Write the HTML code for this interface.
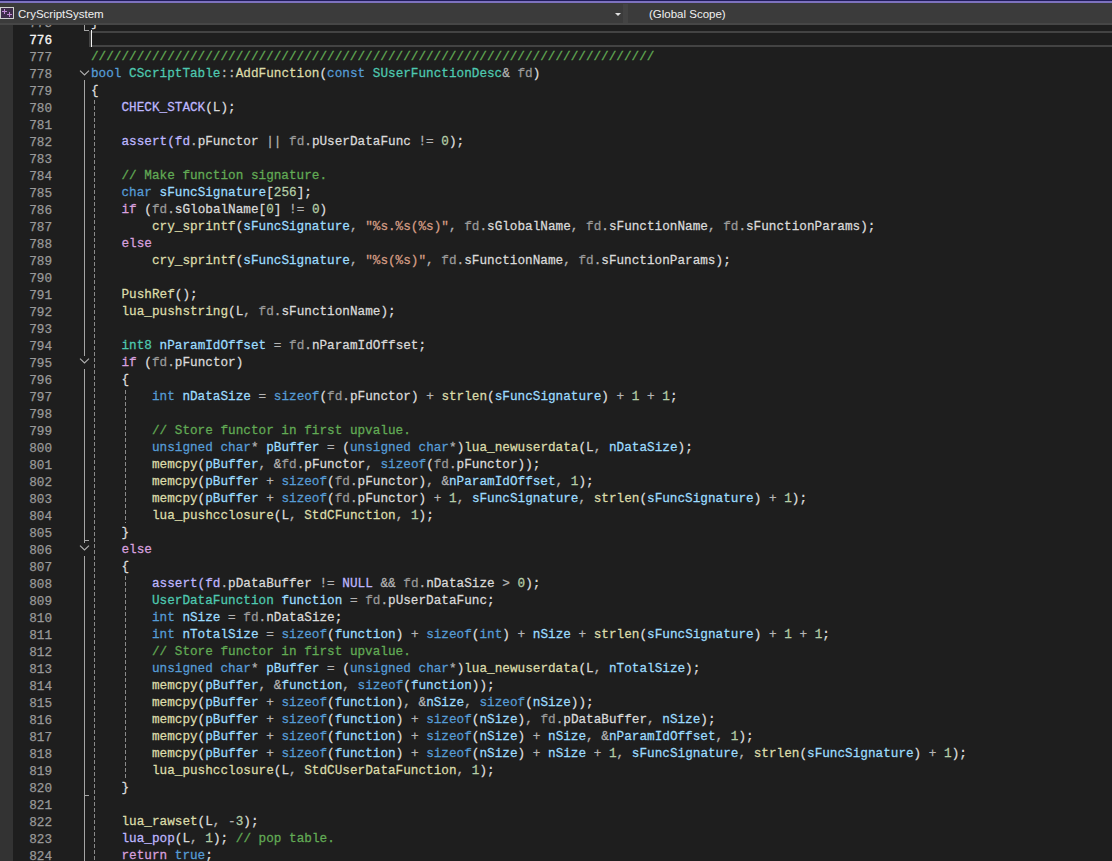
<!DOCTYPE html>
<html><head><meta charset="utf-8">
<style>
html,body{margin:0;padding:0;}
body{width:1112px;height:861px;overflow:hidden;position:relative;background:#1E1E1E;font-family:"Liberation Mono",monospace;}
#ed{position:absolute;left:0;top:0;width:1112px;height:861px;overflow:hidden;}
.l{position:absolute;left:91px;margin-top:1px;transform:scaleY(1.05);transform-origin:0 12px;height:17px;line-height:17px;font-size:12.69px;white-space:pre;-webkit-text-stroke:0.25px currentColor;color:#DCDCDC;}
.n{position:absolute;left:13px;width:39px;text-align:right;height:17px;line-height:17px;font-size:12.69px;margin-top:2px;-webkit-text-stroke:0.25px currentColor;color:#999999;}
.n.cur{color:#F4F4F4;-webkit-text-stroke:0.35px currentColor;}
i{font-style:normal;}
.kw{color:#569CD6}.ct{color:#D8A0DF}.ty{color:#4EC9B0}.fn{color:#DCDCAA}.lo{color:#9CDCFE}
.pa{color:#9A9A9A}.fl{color:#DADADA}.ma{color:#BEB7FF}.op{color:#B4B4B4}.nu{color:#B5CEA8}
.st{color:#D69D85}.cm{color:#62AB55}.p{color:#DCDCDC}
#ind{position:absolute;left:0;top:25px;width:13px;height:836px;background:#333333;}
#curline{position:absolute;left:89px;top:31px;width:1030px;height:12px;border:2px solid #434343;}
#caret{position:absolute;left:91px;top:30px;width:1px;height:17px;background:#F2F2F2;}
.vl{position:absolute;width:1px;background:#A5A5A5;}
.tk{position:absolute;height:1px;width:5px;background:#A5A5A5;}
.dg{position:absolute;width:1px;background:repeating-linear-gradient(to bottom,#8A8A8A 0,#8A8A8A 4px,transparent 4px,transparent 6px);}
.chev{position:absolute;left:79px;width:11px;height:7px;}
#bar{position:absolute;left:0;top:0;width:1112px;height:25px;background:#3B3B3B;z-index:5;font-family:"Liberation Sans",sans-serif;}
#t0{position:absolute;left:0;top:0;width:1112px;height:1px;background:#211C5C;}
#t1{position:absolute;left:0;top:1px;width:1112px;height:2px;background:#7D72BF;}
#tb{position:absolute;left:0;top:23px;width:1112px;height:2px;background:#464646;}
#proj{position:absolute;left:18px;top:6px;font-size:11.5px;line-height:16px;color:#F0F0F0;}
#scope{position:absolute;left:649px;top:6px;font-size:11.5px;line-height:16px;color:#F0F0F0;}
#sep{position:absolute;left:623px;top:4px;width:5px;height:19px;background:#434343;}
#arrow{position:absolute;left:615px;top:13px;width:0;height:0;border-left:3px solid transparent;border-right:3px solid transparent;border-top:3px solid #E0E0E0;}
#icon{position:absolute;left:0;top:7px;width:14px;height:12px;}
</style></head><body>
<div id="ed">
<div id="ind"></div>
<div class="n" style="top:13px">775</div>
<div class="n cur" style="top:30px">776</div>
<div class="n" style="top:47px">777</div>
<div class="n" style="top:64px">778</div>
<div class="n" style="top:81px">779</div>
<div class="n" style="top:98px">780</div>
<div class="n" style="top:115px">781</div>
<div class="n" style="top:132px">782</div>
<div class="n" style="top:149px">783</div>
<div class="n" style="top:166px">784</div>
<div class="n" style="top:183px">785</div>
<div class="n" style="top:200px">786</div>
<div class="n" style="top:217px">787</div>
<div class="n" style="top:234px">788</div>
<div class="n" style="top:251px">789</div>
<div class="n" style="top:268px">790</div>
<div class="n" style="top:285px">791</div>
<div class="n" style="top:302px">792</div>
<div class="n" style="top:319px">793</div>
<div class="n" style="top:336px">794</div>
<div class="n" style="top:353px">795</div>
<div class="n" style="top:370px">796</div>
<div class="n" style="top:387px">797</div>
<div class="n" style="top:404px">798</div>
<div class="n" style="top:421px">799</div>
<div class="n" style="top:438px">800</div>
<div class="n" style="top:455px">801</div>
<div class="n" style="top:472px">802</div>
<div class="n" style="top:489px">803</div>
<div class="n" style="top:506px">804</div>
<div class="n" style="top:523px">805</div>
<div class="n" style="top:540px">806</div>
<div class="n" style="top:557px">807</div>
<div class="n" style="top:574px">808</div>
<div class="n" style="top:591px">809</div>
<div class="n" style="top:608px">810</div>
<div class="n" style="top:625px">811</div>
<div class="n" style="top:642px">812</div>
<div class="n" style="top:659px">813</div>
<div class="n" style="top:676px">814</div>
<div class="n" style="top:693px">815</div>
<div class="n" style="top:710px">816</div>
<div class="n" style="top:727px">817</div>
<div class="n" style="top:744px">818</div>
<div class="n" style="top:761px">819</div>
<div class="n" style="top:778px">820</div>
<div class="n" style="top:795px">821</div>
<div class="n" style="top:812px">822</div>
<div class="n" style="top:829px">823</div>
<div class="n" style="top:846px">824</div>
<div id="curline"></div>
<div id="caret"></div>
<!-- outline margin -->
<div class="vl" style="left:84px;top:25px;height:5px"></div>
<div class="tk" style="left:84px;top:30px"></div>
<svg class="chev" style="top:70px" viewBox="0 0 11 7"><path d="M1 0.6 L5.5 5 L10 0.6" fill="none" stroke="#B0B0B0" stroke-width="1.15"/></svg>
<div class="vl" style="left:84px;top:80px;height:276px"></div>
<svg class="chev" style="top:358px" viewBox="0 0 11 7"><path d="M1 0.6 L5.5 5 L10 0.6" fill="none" stroke="#B0B0B0" stroke-width="1.15"/></svg>
<div class="vl" style="left:84px;top:369px;height:174px"></div>
<div class="tk" style="left:84px;top:540px"></div>
<svg class="chev" style="top:545px" viewBox="0 0 11 7"><path d="M1 0.6 L5.5 5 L10 0.6" fill="none" stroke="#B0B0B0" stroke-width="1.15"/></svg>
<div class="vl" style="left:84px;top:556px;height:305px"></div>
<div class="tk" style="left:84px;top:795px"></div>
<!-- indent guides -->
<div class="dg" style="left:94px;top:100px;height:761px"></div>
<div class="dg" style="left:125px;top:390px;height:133px"></div>
<div class="dg" style="left:125px;top:576px;height:203px"></div>
<div class="l" style="top:13px"><i class="p">}</i></div>
<div class="l" style="top:47px"><i class="cm">//////////////////////////////////////////////////////////////////////////</i></div>
<div class="l" style="top:64px"><i class="kw">bool</i> <i class="ty">CScriptTable</i><i class="op">::</i><i class="fn">AddFunction</i><i class="p">(</i><i class="kw">const</i> <i class="ty">SUserFunctionDesc</i><i class="op">&amp;</i> <i class="pa">fd</i><i class="p">)</i></div>
<div class="l" style="top:81px"><i class="p">{</i></div>
<div class="l" style="top:98px">    <i class="ma">CHECK_STACK</i><i class="p">(</i><i class="fl">L</i><i class="p">)</i><i class="p">;</i></div>
<div class="l" style="top:132px">    <i class="ma">assert(fd</i><i class="op">.</i><i class="fl">pFunctor</i> <i class="op">||</i> <i class="pa">fd</i><i class="op">.</i><i class="fl">pUserDataFunc</i> <i class="op">!=</i> <i class="nu">0</i><i class="p">)</i><i class="p">;</i></div>
<div class="l" style="top:166px">    <i class="cm">// Make function signature.</i></div>
<div class="l" style="top:183px">    <i class="kw">char</i> <i class="lo">sFuncSignature</i><i class="p">[</i><i class="nu">256</i><i class="p">]</i><i class="p">;</i></div>
<div class="l" style="top:200px">    <i class="ct">if</i> <i class="p">(</i><i class="pa">fd</i><i class="op">.</i><i class="fl">sGlobalName</i><i class="p">[</i><i class="nu">0</i><i class="p">]</i> <i class="op">!=</i> <i class="nu">0</i><i class="p">)</i></div>
<div class="l" style="top:217px">        <i class="fn">cry_sprintf</i><i class="p">(</i><i class="lo">sFuncSignature</i><i class="op">,</i> <i class="st">"%s.%s(%s)"</i><i class="op">,</i> <i class="pa">fd</i><i class="op">.</i><i class="fl">sGlobalName</i><i class="op">,</i> <i class="pa">fd</i><i class="op">.</i><i class="fl">sFunctionName</i><i class="op">,</i> <i class="pa">fd</i><i class="op">.</i><i class="fl">sFunctionParams</i><i class="p">)</i><i class="p">;</i></div>
<div class="l" style="top:234px">    <i class="ct">else</i></div>
<div class="l" style="top:251px">        <i class="fn">cry_sprintf</i><i class="p">(</i><i class="lo">sFuncSignature</i><i class="op">,</i> <i class="st">"%s(%s)"</i><i class="op">,</i> <i class="pa">fd</i><i class="op">.</i><i class="fl">sFunctionName</i><i class="op">,</i> <i class="pa">fd</i><i class="op">.</i><i class="fl">sFunctionParams</i><i class="p">)</i><i class="p">;</i></div>
<div class="l" style="top:285px">    <i class="fn">PushRef</i><i class="p">(</i><i class="p">)</i><i class="p">;</i></div>
<div class="l" style="top:302px">    <i class="fn">lua_pushstring</i><i class="p">(</i><i class="fl">L</i><i class="op">,</i> <i class="pa">fd</i><i class="op">.</i><i class="fl">sFunctionName</i><i class="p">)</i><i class="p">;</i></div>
<div class="l" style="top:336px">    <i class="ty">int8</i> <i class="lo">nParamIdOffset</i> <i class="op">=</i> <i class="pa">fd</i><i class="op">.</i><i class="fl">nParamIdOffset</i><i class="p">;</i></div>
<div class="l" style="top:353px">    <i class="ct">if</i> <i class="p">(</i><i class="pa">fd</i><i class="op">.</i><i class="fl">pFunctor</i><i class="p">)</i></div>
<div class="l" style="top:370px">    <i class="p">{</i></div>
<div class="l" style="top:387px">        <i class="kw">int</i> <i class="lo">nDataSize</i> <i class="op">=</i> <i class="kw">sizeof</i><i class="p">(</i><i class="pa">fd</i><i class="op">.</i><i class="fl">pFunctor</i><i class="p">)</i> <i class="op">+</i> <i class="fn">strlen</i><i class="p">(</i><i class="lo">sFuncSignature</i><i class="p">)</i> <i class="op">+</i> <i class="nu">1</i> <i class="op">+</i> <i class="nu">1</i><i class="p">;</i></div>
<div class="l" style="top:421px">        <i class="cm">// Store functor in first upvalue.</i></div>
<div class="l" style="top:438px">        <i class="kw">unsigned</i> <i class="kw">char</i><i class="op">*</i> <i class="lo">pBuffer</i> <i class="op">=</i> <i class="p">(</i><i class="kw">unsigned</i> <i class="kw">char</i><i class="op">*</i><i class="p">)</i><i class="fn">lua_newuserdata</i><i class="p">(</i><i class="fl">L</i><i class="op">,</i> <i class="lo">nDataSize</i><i class="p">)</i><i class="p">;</i></div>
<div class="l" style="top:455px">        <i class="fn">memcpy</i><i class="p">(</i><i class="lo">pBuffer</i><i class="op">,</i> <i class="op">&amp;</i><i class="pa">fd</i><i class="op">.</i><i class="fl">pFunctor</i><i class="op">,</i> <i class="kw">sizeof</i><i class="p">(</i><i class="pa">fd</i><i class="op">.</i><i class="fl">pFunctor</i><i class="p">)</i><i class="p">)</i><i class="p">;</i></div>
<div class="l" style="top:472px">        <i class="fn">memcpy</i><i class="p">(</i><i class="lo">pBuffer</i> <i class="op">+</i> <i class="kw">sizeof</i><i class="p">(</i><i class="pa">fd</i><i class="op">.</i><i class="fl">pFunctor</i><i class="p">)</i><i class="op">,</i> <i class="op">&amp;</i><i class="lo">nParamIdOffset</i><i class="op">,</i> <i class="nu">1</i><i class="p">)</i><i class="p">;</i></div>
<div class="l" style="top:489px">        <i class="fn">memcpy</i><i class="p">(</i><i class="lo">pBuffer</i> <i class="op">+</i> <i class="kw">sizeof</i><i class="p">(</i><i class="pa">fd</i><i class="op">.</i><i class="fl">pFunctor</i><i class="p">)</i> <i class="op">+</i> <i class="nu">1</i><i class="op">,</i> <i class="lo">sFuncSignature</i><i class="op">,</i> <i class="fn">strlen</i><i class="p">(</i><i class="lo">sFuncSignature</i><i class="p">)</i> <i class="op">+</i> <i class="nu">1</i><i class="p">)</i><i class="p">;</i></div>
<div class="l" style="top:506px">        <i class="fn">lua_pushcclosure</i><i class="p">(</i><i class="fl">L</i><i class="op">,</i> <i class="fn">StdCFunction</i><i class="op">,</i> <i class="nu">1</i><i class="p">)</i><i class="p">;</i></div>
<div class="l" style="top:523px">    <i class="p">}</i></div>
<div class="l" style="top:540px">    <i class="ct">else</i></div>
<div class="l" style="top:557px">    <i class="p">{</i></div>
<div class="l" style="top:574px">        <i class="ma">assert(fd</i><i class="op">.</i><i class="fl">pDataBuffer</i> <i class="op">!=</i> <i class="ma">NULL</i> <i class="op">&amp;&amp;</i> <i class="pa">fd</i><i class="op">.</i><i class="fl">nDataSize</i> <i class="op">&gt;</i> <i class="nu">0</i><i class="p">)</i><i class="p">;</i></div>
<div class="l" style="top:591px">        <i class="ty">UserDataFunction</i> <i class="lo">function</i> <i class="op">=</i> <i class="pa">fd</i><i class="op">.</i><i class="fl">pUserDataFunc</i><i class="p">;</i></div>
<div class="l" style="top:608px">        <i class="kw">int</i> <i class="lo">nSize</i> <i class="op">=</i> <i class="pa">fd</i><i class="op">.</i><i class="fl">nDataSize</i><i class="p">;</i></div>
<div class="l" style="top:625px">        <i class="kw">int</i> <i class="lo">nTotalSize</i> <i class="op">=</i> <i class="kw">sizeof</i><i class="p">(</i><i class="lo">function</i><i class="p">)</i> <i class="op">+</i> <i class="kw">sizeof</i><i class="p">(</i><i class="kw">int</i><i class="p">)</i> <i class="op">+</i> <i class="lo">nSize</i> <i class="op">+</i> <i class="fn">strlen</i><i class="p">(</i><i class="lo">sFuncSignature</i><i class="p">)</i> <i class="op">+</i> <i class="nu">1</i> <i class="op">+</i> <i class="nu">1</i><i class="p">;</i></div>
<div class="l" style="top:642px">        <i class="cm">// Store functor in first upvalue.</i></div>
<div class="l" style="top:659px">        <i class="kw">unsigned</i> <i class="kw">char</i><i class="op">*</i> <i class="lo">pBuffer</i> <i class="op">=</i> <i class="p">(</i><i class="kw">unsigned</i> <i class="kw">char</i><i class="op">*</i><i class="p">)</i><i class="fn">lua_newuserdata</i><i class="p">(</i><i class="fl">L</i><i class="op">,</i> <i class="lo">nTotalSize</i><i class="p">)</i><i class="p">;</i></div>
<div class="l" style="top:676px">        <i class="fn">memcpy</i><i class="p">(</i><i class="lo">pBuffer</i><i class="op">,</i> <i class="op">&amp;</i><i class="lo">function</i><i class="op">,</i> <i class="kw">sizeof</i><i class="p">(</i><i class="lo">function</i><i class="p">)</i><i class="p">)</i><i class="p">;</i></div>
<div class="l" style="top:693px">        <i class="fn">memcpy</i><i class="p">(</i><i class="lo">pBuffer</i> <i class="op">+</i> <i class="kw">sizeof</i><i class="p">(</i><i class="lo">function</i><i class="p">)</i><i class="op">,</i> <i class="op">&amp;</i><i class="lo">nSize</i><i class="op">,</i> <i class="kw">sizeof</i><i class="p">(</i><i class="lo">nSize</i><i class="p">)</i><i class="p">)</i><i class="p">;</i></div>
<div class="l" style="top:710px">        <i class="fn">memcpy</i><i class="p">(</i><i class="lo">pBuffer</i> <i class="op">+</i> <i class="kw">sizeof</i><i class="p">(</i><i class="lo">function</i><i class="p">)</i> <i class="op">+</i> <i class="kw">sizeof</i><i class="p">(</i><i class="lo">nSize</i><i class="p">)</i><i class="op">,</i> <i class="pa">fd</i><i class="op">.</i><i class="fl">pDataBuffer</i><i class="op">,</i> <i class="lo">nSize</i><i class="p">)</i><i class="p">;</i></div>
<div class="l" style="top:727px">        <i class="fn">memcpy</i><i class="p">(</i><i class="lo">pBuffer</i> <i class="op">+</i> <i class="kw">sizeof</i><i class="p">(</i><i class="lo">function</i><i class="p">)</i> <i class="op">+</i> <i class="kw">sizeof</i><i class="p">(</i><i class="lo">nSize</i><i class="p">)</i> <i class="op">+</i> <i class="lo">nSize</i><i class="op">,</i> <i class="op">&amp;</i><i class="lo">nParamIdOffset</i><i class="op">,</i> <i class="nu">1</i><i class="p">)</i><i class="p">;</i></div>
<div class="l" style="top:744px">        <i class="fn">memcpy</i><i class="p">(</i><i class="lo">pBuffer</i> <i class="op">+</i> <i class="kw">sizeof</i><i class="p">(</i><i class="lo">function</i><i class="p">)</i> <i class="op">+</i> <i class="kw">sizeof</i><i class="p">(</i><i class="lo">nSize</i><i class="p">)</i> <i class="op">+</i> <i class="lo">nSize</i> <i class="op">+</i> <i class="nu">1</i><i class="op">,</i> <i class="lo">sFuncSignature</i><i class="op">,</i> <i class="fn">strlen</i><i class="p">(</i><i class="lo">sFuncSignature</i><i class="p">)</i> <i class="op">+</i> <i class="nu">1</i><i class="p">)</i><i class="p">;</i></div>
<div class="l" style="top:761px">        <i class="fn">lua_pushcclosure</i><i class="p">(</i><i class="fl">L</i><i class="op">,</i> <i class="fn">StdCUserDataFunction</i><i class="op">,</i> <i class="nu">1</i><i class="p">)</i><i class="p">;</i></div>
<div class="l" style="top:778px">    <i class="p">}</i></div>
<div class="l" style="top:812px">    <i class="fn">lua_rawset</i><i class="p">(</i><i class="fl">L</i><i class="op">,</i> <i class="op">-</i><i class="nu">3</i><i class="p">)</i><i class="p">;</i></div>
<div class="l" style="top:829px">    <i class="ma">lua_pop</i><i class="p">(</i><i class="fl">L</i><i class="op">,</i> <i class="nu">1</i><i class="p">)</i><i class="p">;</i> <i class="cm">// pop table.</i></div>
<div class="l" style="top:846px">    <i class="ct">return</i> <i class="kw">true</i><i class="p">;</i></div>
</div>
<div id="bar">
<div id="t0"></div><div id="t1"></div><div id="tb"></div>
<svg id="icon" viewBox="0 0 14 12" shape-rendering="crispEdges"><rect x="0.5" y="0.5" width="13" height="11" fill="#3F2E4C" stroke="#D0D0D0" stroke-width="1"/><rect x="2" y="4" width="5" height="1" fill="#C28CD6"/><rect x="4" y="2" width="1" height="5" fill="#C28CD6"/><rect x="7" y="7" width="5" height="1" fill="#C28CD6"/><rect x="9" y="5" width="1" height="5" fill="#C28CD6"/></svg>
<div id="proj">CryScriptSystem</div>
<div id="arrow"></div>
<div id="sep"></div>
<div id="scope">(Global Scope)</div>
</div>
</body></html>
